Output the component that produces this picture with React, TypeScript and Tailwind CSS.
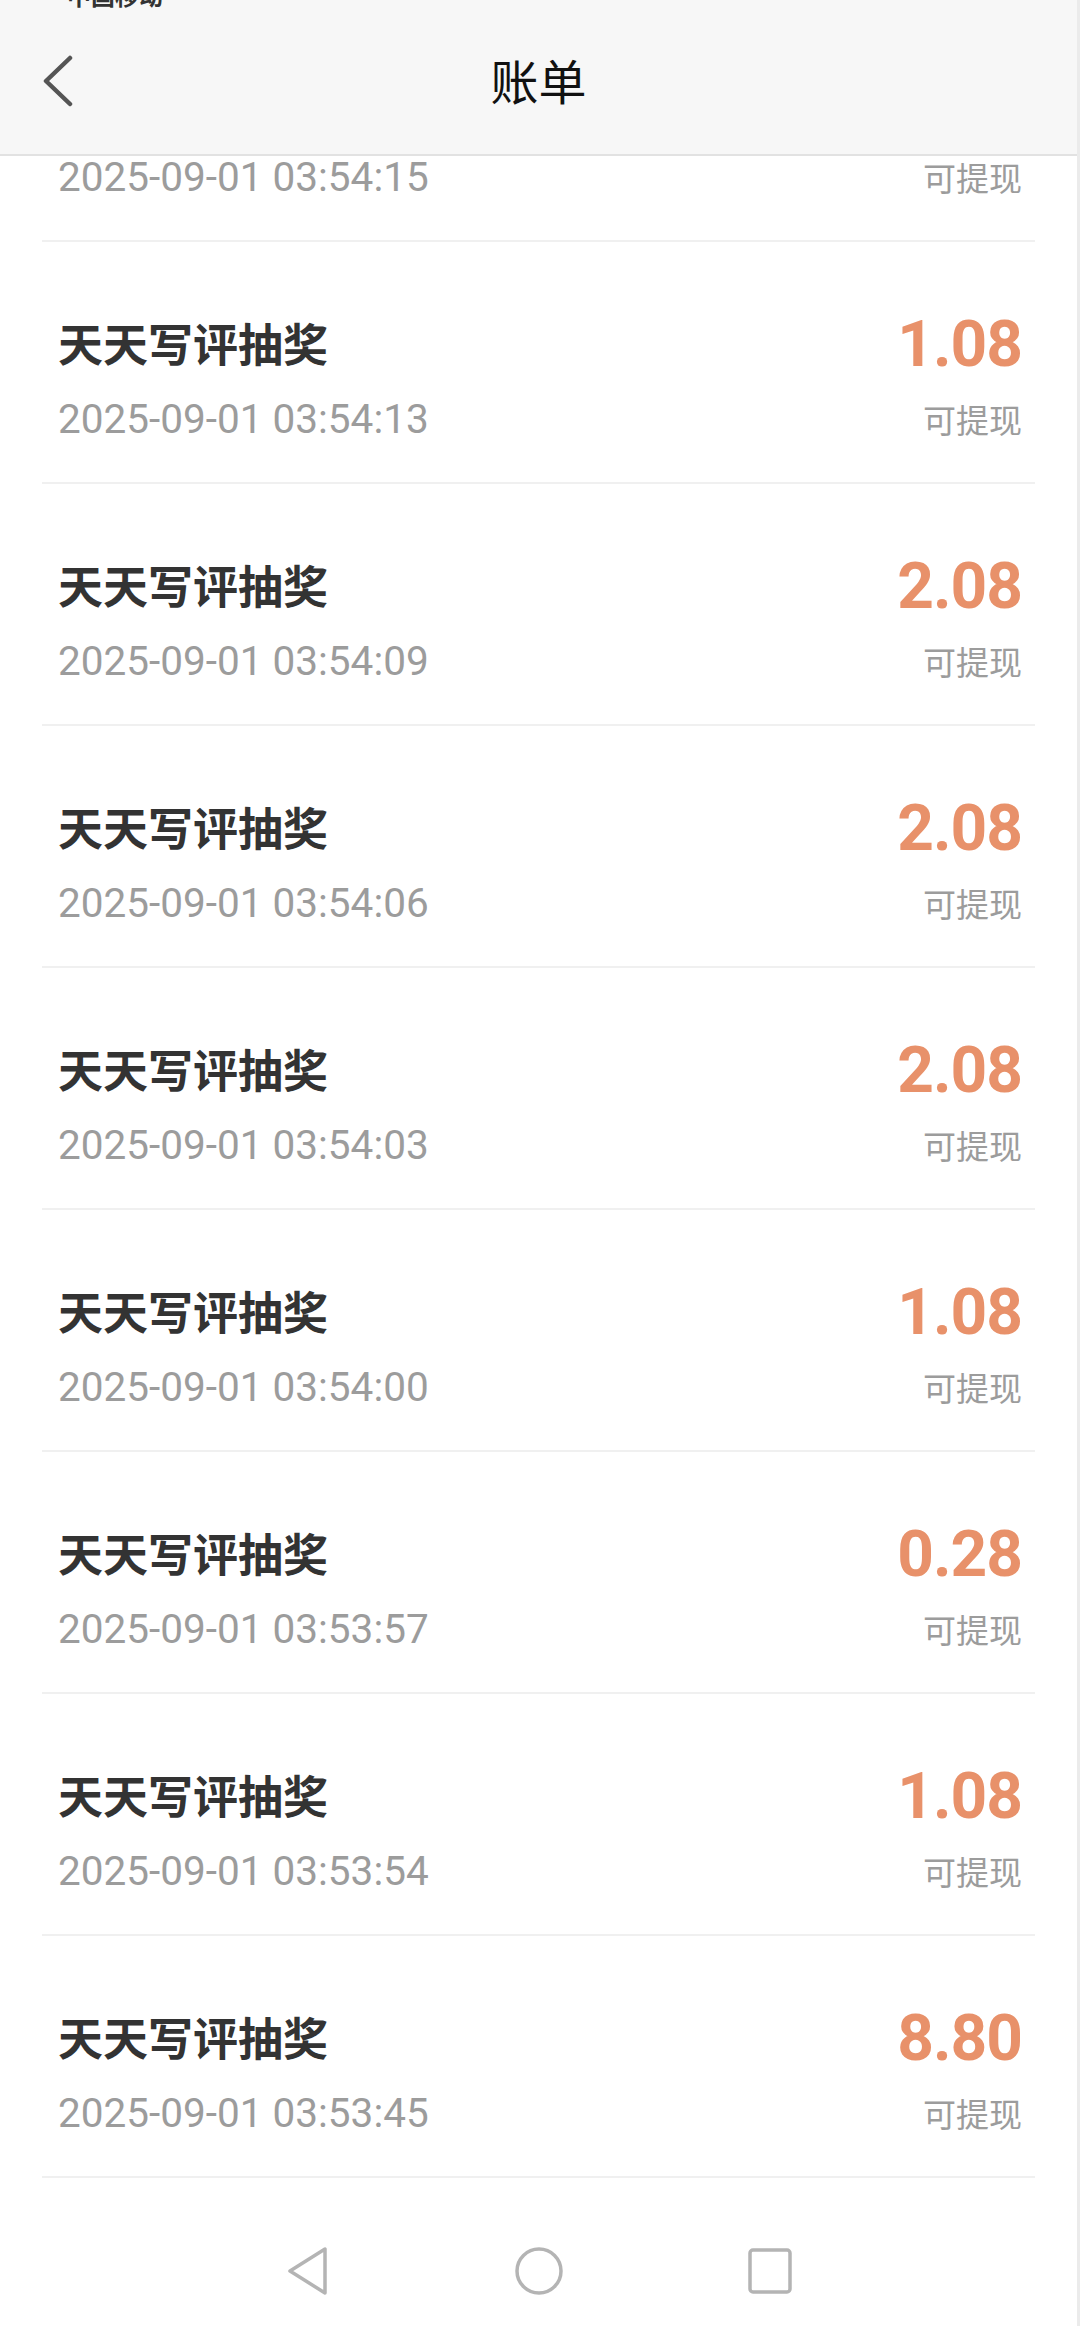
import React from "react";

const rows = [
  { amount: "1.08", time: "2025-09-01 03:54:15" },
  { amount: "1.08", time: "2025-09-01 03:54:13" },
  { amount: "2.08", time: "2025-09-01 03:54:09" },
  { amount: "2.08", time: "2025-09-01 03:54:06" },
  { amount: "2.08", time: "2025-09-01 03:54:03" },
  { amount: "1.08", time: "2025-09-01 03:54:00" },
  { amount: "0.28", time: "2025-09-01 03:53:57" },
  { amount: "1.08", time: "2025-09-01 03:53:54" },
  { amount: "8.80", time: "2025-09-01 03:53:45" },
];

const cjk = { fontFamily: '"Noto Sans CJK SC", "Noto Sans", sans-serif' };
const roboto = { fontFamily: 'Roboto, "Noto Sans CJK SC", sans-serif' };

function Row({ amount, time }: { amount: string; time: string }) {
  return (
    <div className="mx-[42px] h-[242px] border-b-2 border-[#f0f0f0] pl-[16px] pr-[13px] pt-[73px] flex flex-col">
      <div className="h-[56px] flex items-center justify-between">
        <span className="text-[45px] leading-[56px] font-bold text-[#333333]" style={cjk}>
          天天写评抽奖
        </span>
        <span className="text-[64px] leading-[64px] font-bold text-[#e8916a] tracking-[-1px] translate-y-[2px]" style={roboto}>
          {amount}
        </span>
      </div>
      <div className="mt-[24px] h-[48px] flex items-center justify-between">
        <span className="text-[40.5px] leading-[48px] text-[#9c9c9c]" style={roboto}>
          {time}
        </span>
        <span className="text-[33px] leading-[48px] text-[#9c9c9c]" style={cjk}>
          可提现
        </span>
      </div>
    </div>
  );
}

export default function App() {
  return (
    <div className="relative w-[1080px] h-[2326px] bg-white overflow-hidden border-r-[3px] border-[#ebebeb] flex flex-col">
      <div className="flex flex-col">
        {rows.map((r, i) => (
          <Row key={i} amount={r.amount} time={r.time} />
        ))}
      </div>

      <div className="flex-1 flex justify-center pt-[68px]">
        <div className="w-[231px] flex justify-center">
          <svg width="44" height="50" viewBox="0 0 44 50">
            <path d="M39 3 L39 47 L4 25 Z" fill="none" stroke="#b4b4b4" strokeWidth="3.5" strokeLinejoin="round" />
          </svg>
        </div>
        <div className="w-[231px] flex justify-center">
          <svg width="50" height="50" viewBox="0 0 50 50">
            <circle cx="25" cy="25" r="22" fill="none" stroke="#b4b4b4" strokeWidth="3.5" />
          </svg>
        </div>
        <div className="w-[231px] flex justify-center">
          <svg width="44" height="50" viewBox="0 0 44 50">
            <rect x="2" y="4" width="40" height="42" rx="3" fill="none" stroke="#b4b4b4" strokeWidth="3.5" />
          </svg>
        </div>
      </div>

      <div className="absolute top-0 left-0 w-[1077px] h-[156px] bg-[#f7f7f7] border-b-2 border-[#e2e2e2] flex flex-col">
        <div className="-mt-[17px] h-[24px] pl-[67px] text-[24px] leading-[24px] font-bold text-[#333333]" style={cjk}>
          中国移动
        </div>
        <div className="relative mt-[44px] h-[56px] flex items-center justify-center">
          <svg className="absolute left-[40px] top-[4px]" width="36" height="52" viewBox="0 0 36 52">
            <polyline points="30,3 6,26 30,49" fill="none" stroke="#555555" strokeWidth="4.5" strokeLinecap="round" strokeLinejoin="round" />
          </svg>
          <span className="text-[48px] leading-[56px] text-[#111111]" style={cjk}>
            账单
          </span>
        </div>
      </div>
    </div>
  );
}
